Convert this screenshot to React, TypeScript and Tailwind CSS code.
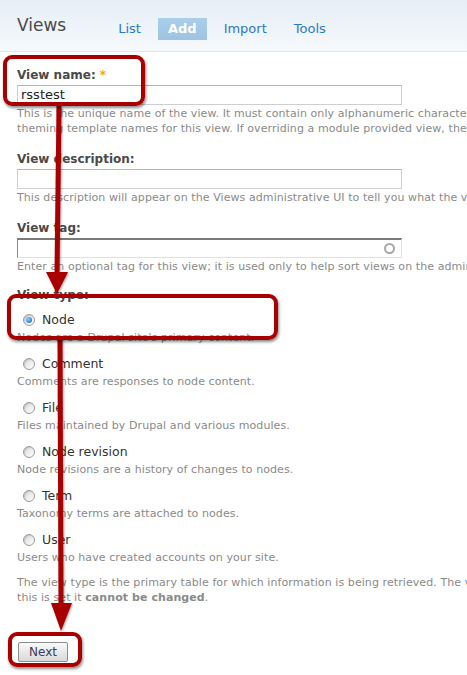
import React from "react";

const helpCls = "mt-[1px] whitespace-nowrap text-[11px] leading-[15px] tracking-[0.08px] text-[#8a8a8a]";
const labelCls = "text-[12px] font-bold leading-[16px] text-[#4a4a4a]";
const inputCls = "mt-[2px] h-[20px] w-[385px] border border-[#cfcfcf] border-t-[#b5b5b5] bg-white";

function Radio({ checked }: { checked?: boolean }) {
  return (
    <span className="inline-flex h-[12px] w-[12px] items-center justify-center rounded-full border border-[#9c9c9c] bg-linear-to-br from-[#d9d9d9] to-[#ffffff] shadow-[inset_1px_1px_1px_rgba(0,0,0,0.12)]">
      {checked && (
        <span className="h-[6px] w-[6px] rounded-full bg-[radial-gradient(circle_at_35%_35%,#8fd0ff,#0b5db0)]" />
      )}
    </span>
  );
}

const types = [
  { name: "Node", help: "Nodes are a Drupal site's primary content.", checked: true },
  { name: "Comment", help: "Comments are responses to node content." },
  { name: "File", help: "Files maintained by Drupal and various modules." },
  { name: "Node revision", help: "Node revisions are a history of changes to nodes." },
  { name: "Term", help: "Taxonomy terms are attached to nodes." },
  { name: "User", help: "Users who have created accounts on your site." },
];

export default function App() {
  return (
    <div className="relative h-[675px] w-[467px] overflow-hidden bg-white font-['DejaVu_Sans',Verdana,sans-serif]">
      {/* header */}
      <div className="flex h-[52px] items-start border-b border-[#dfe6ee] bg-linear-to-b from-[#e6eef7] to-[#f6f9fc] pl-[17px]">
        <h1 className="mt-[15px] text-[17px] leading-[20px] text-[#4a4a4a]">Views</h1>
        <nav className="ml-[42px] mt-[18px] flex gap-[7px] text-[13px] leading-[22px]">
          <span className="h-[22px] px-[10px] text-[#2a7ac6]">List</span>
          <span className="h-[22px] bg-linear-to-b from-[#aacfea] to-[#9dc3e2] px-[10px] font-bold text-white">Add</span>
          <span className="h-[22px] px-[10px] text-[#2a7ac6]">Import</span>
          <span className="h-[22px] px-[10px] text-[#2a7ac6]">Tools</span>
        </nav>
      </div>

      <div className="px-[17px]">
        {/* view name */}
        <div className="pt-[15px]">
          <div className={labelCls}>
            View name: <span className="text-[#f7a600]">*</span>
          </div>
          <div className={inputCls + " pl-[3px] text-[13px] leading-[18px] text-[#222]"}>rsstest</div>
          <div className={helpCls}>
            This is the unique name of the view. It must contain only alphanumeric characters and underscores; it is used to identify the view internally and to generate unique
            <br />
            theming template names for this view. If overriding a module provided view, the name must match exactly.
          </div>
        </div>

        {/* description */}
        <div className="pt-[15px]">
          <div className={labelCls}>View description:</div>
          <div className={inputCls} />
          <div className={helpCls}>
            This description will appear on the Views administrative UI to tell you what the view is about.
          </div>
        </div>

        {/* tag */}
        <div className="pt-[15px]">
          <div className={labelCls}>View tag:</div>
          <div className="mt-[2px] flex h-[20px] w-[385px] items-center justify-end border border-t-2 border-[#e2e2e2] border-l-[#8a8a8a] border-t-[#7a7a7a] bg-white pr-[6px]">
            <span className="h-[11px] w-[11px] rounded-full border-2 border-[#a8a8a8]" />
          </div>
          <div className={helpCls}>
            Enter an optional tag for this view; it is used only to help sort views on the administrative page.
          </div>
        </div>

        {/* type */}
        <div className="pt-[13px]">
          <div className={labelCls}>View type:</div>
          <div className="mt-[7px] flex flex-col gap-[9px]">
            {types.map((t) => (
              <div key={t.name}>
                <label className="flex h-[20px] items-center gap-[7px] pl-[6px] text-[12.5px] text-[#333]">
                  <Radio checked={t.checked} />
                  {t.name}
                </label>
                <div className="whitespace-nowrap text-[11px] leading-[15px] tracking-[0.08px] text-[#8a8a8a]">{t.help}</div>
              </div>
            ))}
          </div>
          <p className="mt-[10px] whitespace-nowrap text-[11px] leading-[15px] tracking-[0.08px] text-[#8a8a8a]">
            The view type is the primary table for which information is being retrieved. The view type controls what arguments, fields, sort criteria and filters are available, so once
            <br />
            this is set it <strong>cannot be changed</strong>.
          </p>
        </div>

        <button className="mt-[37px] ml-[1px] h-[20px] w-[50px] rounded-[2px] border border-[#8c8c8c] bg-linear-to-b from-[#fafafa] to-[#d9d9d9] text-[12px] leading-[18px] text-[#3c3c5c]">
          Next
        </button>
      </div>

      {/* annotation overlays */}
      <svg className="pointer-events-none absolute inset-0 drop-shadow-[1px_1px_1px_rgba(0,0,0,0.35)]" width="467" height="675">
        <line x1="59" y1="106" x2="57" y2="274" stroke="#a80000" strokeWidth="5" />
        <polygon points="46,272 68,272 57,294" fill="#a80000" />
        <line x1="60" y1="340" x2="61" y2="605" stroke="#a80000" strokeWidth="5" />
        <polygon points="51,603 72,603 61,631" fill="#a80000" />
      </svg>
      <div className="pointer-events-none absolute left-[3px] top-[55px] h-[51px] w-[142px] rounded-[9px] border-4 border-[#a80000] shadow-[1px_2px_3px_rgba(0,0,0,0.45)]" />
      <div className="pointer-events-none absolute left-[7px] top-[294px] h-[46px] w-[271px] rounded-[9px] border-4 border-[#a80000] shadow-[1px_2px_3px_rgba(0,0,0,0.45)]" />
      <div className="pointer-events-none absolute left-[8px] top-[632px] h-[35px] w-[74px] rounded-[9px] border-4 border-[#a80000] shadow-[1px_2px_3px_rgba(0,0,0,0.45)]" />
    </div>
  );
}
